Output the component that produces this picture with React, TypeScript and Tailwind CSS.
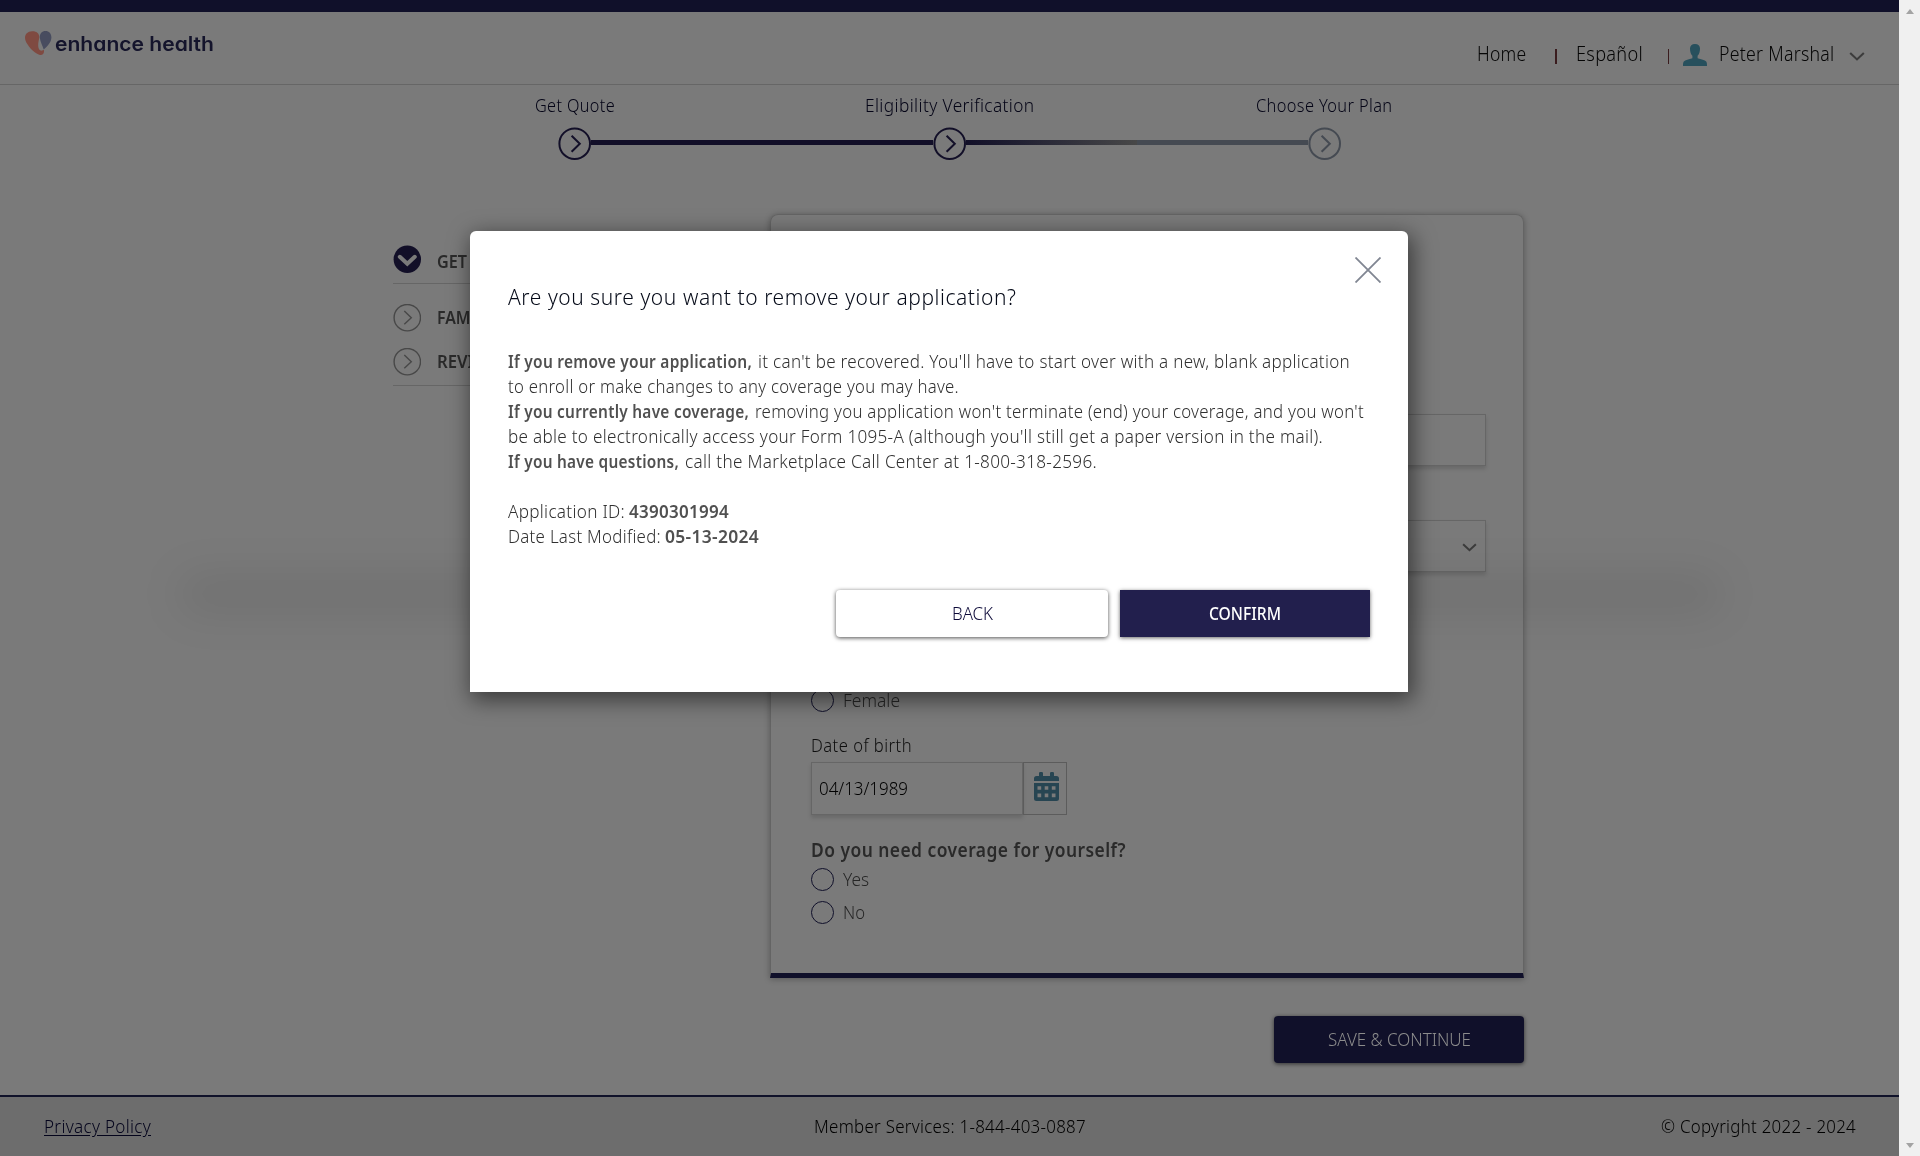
import { useLayoutEffect, useRef, useState } from "react";
import type { ReactNode } from "react";

/* A single line of text condensed or widened to an exact width. */
function Fit({ w, className = "", children }: { w: number; className?: string; children: ReactNode }) {
  const ref = useRef<HTMLSpanElement>(null);
  const [scale, setScale] = useState(1);
  useLayoutEffect(() => {
    if (ref.current && ref.current.offsetWidth) setScale(w / ref.current.getBoundingClientRect().width);
  }, [w]);
  return (
    <span className={"inline-block shrink-0 whitespace-nowrap " + className} style={{ width: w }}>
      <span ref={ref} className="inline-block origin-left" style={{ transform: `scaleX(${scale})` }}>
        {children}
      </span>
    </span>
  );
}

function StepCircle({ className }: { className: string }) {
  return (
    <svg viewBox="0 0 33 33" className={"size-[33px] shrink-0 " + className} fill="none" stroke="currentColor" strokeWidth="2">
      <circle cx="16.700" cy="16.700" r="15.300" />
      <path d="M13.600 8.700 21.800 16.700 13.600 24.700" />
    </svg>
  );
}

function SideItem({ label, w }: { label: string; w: number }) {
  return (
    <div className="flex h-7 items-center">
      <svg viewBox="0 0 28 28" className="size-7 shrink-0 text-[#484848]" fill="none" stroke="currentColor" strokeWidth="1.4">
        <circle cx="14.3" cy="13.700" r="13.2" />
        <path d="M11.300 6.900 18.300 13.700 11.300 20.300" />
      </svg>
      <Fit w={w} className="ml-4 text-[17px] leading-7 font-semibold text-[#2a2a2a]">{label}</Fit>
    </div>
  );
}

function Radio({ label, w }: { label: string; w: number }) {
  return (
    <div className="flex h-[23px] items-center">
      <span className="size-[23px] shrink-0 rounded-full border border-[#10102a]" />
      <Fit w={w} className="ml-[9px] text-[17.5px] leading-[23px] font-light text-[#262626]">{label}</Fit>
    </div>
  );
}

function ChevronDown({ className }: { className: string }) {
  return (
    <svg viewBox="0 0 16 9" className={"shrink-0 " + className} fill="none" stroke="currentColor" strokeWidth="2.1">
      <path d="M1.200 1 8 7.400 14.800 1" />
    </svg>
  );
}

function Header() {
  return (
    <header className="flex h-[85px] flex-col border-t-[12px] border-b border-t-[#10102a] border-b-[#666]">
      <div className="flex h-[72px] items-start pl-[25px]">
        <svg viewBox="0 0 27 24" className="mt-[19px] h-6 w-[27px] shrink-0">
          <path fill="#7f4a41" d="M7 0.300C11 0 14.200 2.200 14.300 6C14.300 8 13 11 13.200 15C13.400 18.500 15 20 17 19.600C18.600 19 19.200 18.600 19 20.500C18.900 23 17.500 24 15.500 23.900C12 23.600 7.500 20 4 15.500C1.500 12.200 0 9.500 0 6.800C0 3 2.700 0.500 7 0.300Z" />
          <path fill="#484c5f" d="M20.500 0C24 0 26.500 2.700 26.400 6.500C26.300 11.500 22.500 15.200 18.700 18.400C17.800 15 15 10.500 14.800 6.500C14.700 2.500 17 0 20.500 0Z" />
        </svg>
        <Fit w={159} className="mt-[18px] ml-[2.5px] font-['Inter'] text-[19.5px] leading-7 font-semibold text-[#14142c] [font-feature-settings:'cv11']">enhance health</Fit>
        <nav className="mt-[28px] ml-auto flex items-center pr-[34.5px] text-[19.5px] leading-7 font-light tracking-[0.3px] text-[#050505]">
          <Fit w={49.5}>Home</Fit>
          <span className="mt-1 ml-[29px] h-[15px] w-[1.5px] bg-[#3a1c1e]" />
          <Fit w={67} className="ml-[19.5px]">Español</Fit>
          <span className="mt-1 ml-[24.5px] h-[15px] w-[1.5px] bg-[#3a1c1e]" />
          <svg viewBox="0 0 24 22" className="ml-[14px] mt-px h-[22px] w-6 shrink-0" fill="#27505d">
            <path d="M12 0C15.200 0 17 1.800 17 4.600C17 8 16.200 10.400 14.600 11.800V14.300C18 15.200 22 16 23.200 17.600C24 18.800 24 20.400 24 22H0C0 20.400 0 18.800.8 17.600C2 16 6 15.200 9.400 14.300V11.800C7.800 10.400 7 8 7 4.600C7 1.800 8.800 0 12 0Z" />
          </svg>
          <Fit w={115.5} className="ml-3">Peter Marshal</Fit>
          <ChevronDown className="mt-1 ml-[14px] h-[9px] w-4 text-[#3c3c3c]" />
        </nav>
      </div>
    </header>
  );
}

function Steps() {
  return (
    <section>
      <div className="flex pt-2 pl-[387px] text-[17.5px] leading-6 font-light tracking-[0.4px] text-[#040416]">
        <div className="flex w-[375px] justify-center"><Fit w={80}>Get Quote</Fit></div>
        <div className="flex w-[375px] justify-center"><Fit w={169.5}>Eligibility Verification</Fit></div>
        <div className="flex w-[375px] justify-center"><Fit w={136.5}>Choose Your Plan</Fit></div>
      </div>
      <div className="mt-[10px] flex h-[33px] pl-[558px]">
        <StepCircle className="text-[#120f28]" />
        <div className="mt-[13px] h-[5px] w-[342px] bg-[#120f28]" />
        <StepCircle className="text-[#120f28]" />
        <div className="mt-[13px] h-[5px] w-[171px] bg-linear-to-r from-[#120f28] to-[#484848]" />
        <div className="mt-[13px] h-[5px] w-[171px] bg-[#454a52]" />
        <StepCircle className="text-[#454a52]" />
      </div>
    </section>
  );
}

function Sidebar() {
  return (
    <aside className="mt-[85px] ml-[393px] h-fit w-[347px]">
      <div className="flex h-[39px] border-b border-[#666]">
        <svg viewBox="0 0 28 28" className="size-7 shrink-0">
          <circle cx="14.3" cy="14.3" r="13.700" fill="#120f28" />
          <path d="M6.800 11.800 14.300 18.800 21.800 11.800" fill="none" stroke="#7a7a7a" strokeWidth="4" strokeLinecap="round" />
        </svg>
        <Fit w={30} className="mt-[3px] ml-4 text-[17px] leading-7 font-semibold text-[#2a2a2a]">GET</Fit>
      </div>
      <div className="mt-[20px] flex flex-col gap-4 border-b border-[#666] pb-[9px]">
        <SideItem label="FAMILY" w={57} />
        <SideItem label="REVIEW" w={62} />
      </div>
    </aside>
  );
}

function FormCard() {
  return (
    <section className="mt-[54px] ml-[30px] flex h-[764px] w-[754px] flex-col rounded-t-lg border border-b-[5px] border-[#646464] border-b-[#10102a] pl-10 shadow-[0_1px_6px_rgba(0,0,0,0.3)]">
      <div className="mt-[199px] h-[52px] w-[675px] shrink-0 border border-[#666] shadow-[0_3px_4px_rgba(0,0,0,0.14)]" />
      <div className="mt-[54px] flex h-[52px] w-[675px] shrink-0 items-center justify-end border border-[#666] pr-[8px] shadow-[0_3px_4px_rgba(0,0,0,0.14)]">
        <ChevronDown className="mt-0.5 h-[9px] w-[15px] text-[#3c3c3c]" />
      </div>
      <div className="mt-[117px]"><Radio label="Female" w={57} /></div>
      <Fit w={101} className="mt-[21px] text-[17.5px] leading-6 font-light tracking-[0.5px] text-[#0e0e0e]">Date of birth</Fit>
      <div className="mt-[5px] flex h-[53px]">
        <div className="flex w-[212px] items-center border border-[#666] pl-[7px] shadow-[0_3px_4px_rgba(0,0,0,0.14)]">
          <Fit w={89} className="text-[17.5px] font-light text-black">04/13/1989</Fit>
        </div>
        <div className="w-11 border border-[#5c5c5c] pt-[9px] pl-[10px]">
          <svg viewBox="0 0 25 29" className="h-[29px] w-[25px]" fill="#274552">
            <path d="M5 4V1.200Q5 0 6.200 0H7.800Q9 0 9 1.200V4H16V1.200Q16 0 17.200 0H18.800Q20 0 20 1.200V4H22.500Q25 4 25 6.500V9H0V6.500Q0 4 2.500 4Z" />
            <path fillRule="evenodd" d="M0 11H25V26.500Q25 29 22.500 29H2.500Q0 29 0 26.500ZM3.500 14.200V17.800H7.200V14.200ZM10.700 14.200V17.800H14.300V14.200ZM17.800 14.200V17.800H21.500V14.200ZM3.500 21.500V25.200H7.200V21.500ZM10.700 21.500V25.200H14.300V21.500ZM17.800 21.500V25.200H21.500V21.500Z" />
          </svg>
        </div>
      </div>
      <Fit w={315} className="mt-[23px] text-[19px] leading-6 font-semibold tracking-[0.5px] text-[#2a2a2a]">Do you need coverage for yourself?</Fit>
      <div className="mt-1.5 flex flex-col gap-[9.5px]">
        <Radio label="Yes" w={26} />
        <Radio label="No" w={22} />
      </div>
    </section>
  );
}

function Modal() {
  return (
    <div role="dialog" className="absolute top-[231px] left-[470px] flex h-[461px] w-[938px] flex-col rounded-t-md bg-white pl-[38px] shadow-[3px_6px_22px_2px_rgba(0,0,0,0.52)]">
      <svg viewBox="0 0 26 26" className="mt-[26px] mr-[27px] size-[26px] self-end" stroke="#808692" strokeWidth="1.8">
        <path d="M.5 .5 25.500 25.500M25.500 .5 .5 25.500" />
      </svg>
      <Fit w={508.500} className="-mt-px h-7 text-[22px] leading-7 font-light tracking-[0.6px] text-[#050a18]">Are you sure you want to remove your application?</Fit>
      <div className="mt-[39px] text-[17.5px] leading-[25px] tracking-[0.3px] text-[#505050]">
        <p className="flex gap-1.5"><Fit w={244} className="font-semibold">If you remove your application,</Fit><Fit w={592} className="font-light text-[#303030]">it can't be recovered. You'll have to start over with a new, blank application</Fit></p>
        <p className="flex"><Fit w={451} className="font-light text-[#303030]">to enroll or make changes to any coverage you may have.</Fit></p>
        <p className="flex gap-1.5"><Fit w={241} className="font-semibold">If you currently have coverage,</Fit><Fit w={609} className="font-light text-[#303030]">removing you application won't terminate (end) your coverage, and you won't</Fit></p>
        <p className="flex"><Fit w={815} className="font-light text-[#303030]">be able to electronically access your Form 1095-A (although you'll still get a paper version in the mail).</Fit></p>
        <p className="flex gap-1.5"><Fit w={171} className="font-semibold">If you have questions,</Fit><Fit w={412} className="font-light text-[#303030]">call the Marketplace Call Center at 1-800-318-2596.</Fit></p>
        <p className="mt-[25px] flex gap-1"><Fit w={117} className="font-light text-[#303030]">Application ID:</Fit><Fit w={100} className="font-semibold">4390301994</Fit></p>
        <p className="flex gap-1"><Fit w={153} className="font-light text-[#303030]">Date Last Modified:</Fit><Fit w={94} className="font-semibold">05-13-2024</Fit></p>
      </div>
      <div className="mt-[41px] flex h-[47px] gap-3 pl-[328px] text-[18px]">
        <button className="flex w-[272px] items-center justify-center rounded bg-white font-light text-[#0c0938] shadow-[0_1px_4px_rgba(0,0,0,0.7)]"><Fit w={41}>BACK</Fit></button>
        <button className="flex w-[250px] items-center justify-center bg-[#221f4d] text-white shadow-[0_1px_4px_rgba(0,0,0,0.6)]"><Fit w={72} className="font-medium">CONFIRM</Fit></button>
      </div>
    </div>
  );
}

export default function App() {
  return (
    <div className="relative flex h-[1156px] w-[1920px] overflow-hidden bg-[#7a7a7a] font-['Noto_Sans',sans-serif]">
      <div className="flex w-[1899px] shrink-0 flex-col">
        <Header />
        <Steps />
        <main className="flex h-[818px]">
          <Sidebar />
          <FormCard />
        </main>
        <div className="mt-[38px] flex pl-[1274px]">
          <button className="flex h-[47px] w-[250px] items-center justify-center rounded bg-[#10102a] text-[18px] font-light text-[#8c8c8c] shadow-[0_1px_4px_rgba(0,0,0,0.6)]"><Fit w={143}>SAVE &amp; CONTINUE</Fit></button>
        </div>
        <footer className="mt-8 grid h-[61px] grid-cols-3 border-t-2 border-[#10122a] bg-[#6d6d6d] pt-[17px] pr-[43px] pl-[44px] text-[17.5px] leading-6 font-light tracking-[0.3px] text-black">
          <div><Fit w={107} className="text-[#04041c] [&>span]:underline [&>span]:underline-offset-2">Privacy Policy</Fit></div>
          <div className="flex justify-center"><Fit w={272}>Member Services: 1-844-403-0887</Fit></div>
          <div className="flex justify-end"><Fit w={195}>© Copyright 2022 - 2024</Fit></div>
        </footer>
      </div>
      <div className="flex w-[21px] flex-col items-center justify-between bg-[#f0f0f0] pt-[9px] pb-2">
        <span className="size-0 border-x-[4.5px] border-b-[5px] border-x-transparent border-b-[#a3a3a3]" />
        <span className="size-0 border-x-[4.5px] border-t-[5px] border-x-transparent border-t-[#a3a3a3]" />
      </div>
      <div className="absolute top-[574px] left-[178px] h-10 w-[1544px] rounded-full bg-black/7 blur-[20px]" />
      <Modal />
    </div>
  );
}
